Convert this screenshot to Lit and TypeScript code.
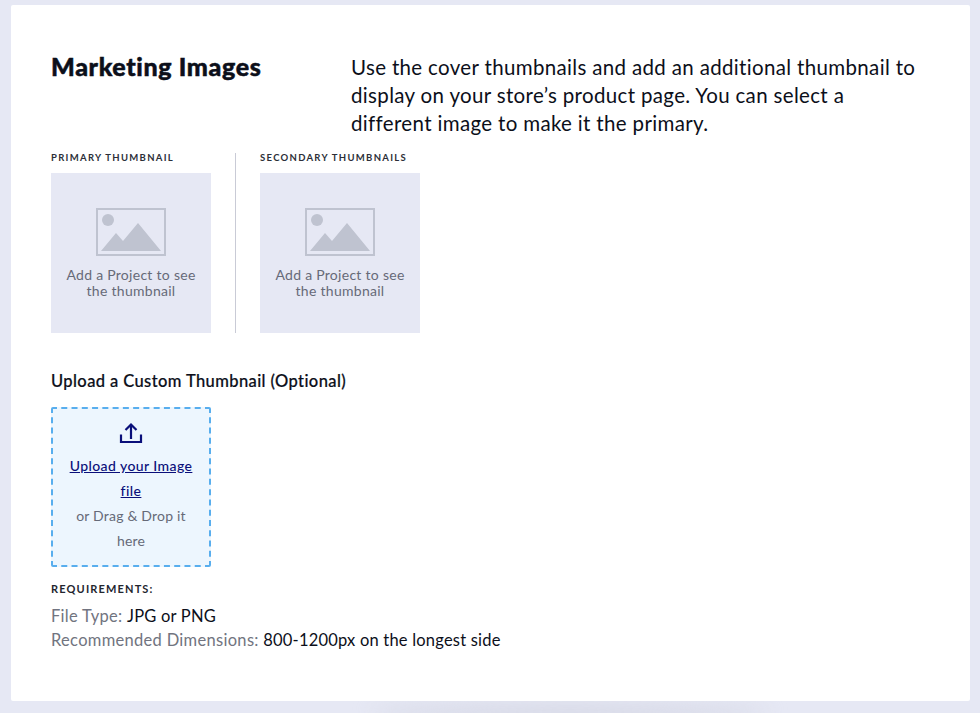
import { LitElement, html, css, svg } from "lit";
import { customElement } from "lit/decorators.js";

const picture = svg`<svg class="pic" width="70" height="48" viewBox="0 0 70 48" aria-hidden="true">
  <rect x="1" y="1" width="68" height="46" fill="none" stroke="#bfc3d0" stroke-width="2"/>
  <circle cx="12" cy="12" r="6" fill="#bfc3d0"/>
  <path d="M5 43 L20 25 L27 33 L42 15 L65 43 Z" fill="#bfc3d0"/>
</svg>`;

@customElement("app-root")
export class AppRoot extends LitElement {
  static styles = css`
    :host {
      display: block;
      min-height: 713px;
      box-sizing: border-box;
      background: #e6e8f4;
      padding: 5px 10px 12px 11px;
      font-family: "Lato", "Noto Sans", sans-serif;
      color: #0c0f1a;
      position: relative;
      overflow: hidden;
    }
    .glow {
      position: absolute;
      left: 370px;
      right: 210px;
      top: 706px;
      height: 14px;
      border-radius: 50%;
      background: #d2d4e2;
      filter: blur(10px);
    }
    .card {
      position: relative;
      background: #fff;
      border-radius: 2px;
      height: 696px;
      box-sizing: border-box;
      padding: 48px 40px 0;
    }
    .head {
      display: flex;
      height: 100px;
    }
    h1 {
      margin: -1px 0 0;
      width: 300px;
      flex: none;
      font-size: 25px;
      line-height: 28px;
      font-weight: 900;
      letter-spacing: 0.65px;
      -webkit-text-stroke: 0.5px #0c0f1a;
      color: #0c0f1a;
    }
    .desc {
      margin: 0;
      width: 580px;
      font-size: 20.5px;
      line-height: 28px;
      letter-spacing: 0.34px;
      color: #0c0f1a;
    }
    .thumbs { display: flex; }
    .col-a {
      width: 160px;
      padding-right: 24px;
      border-right: 1px solid #c9cbd6;
    }
    .col-b { padding-left: 24px; }
    .label {
      font-size: 9.5px;
      line-height: 10px;
      padding-bottom: 10px;
      font-weight: 700;
      letter-spacing: 1.3px;
      color: #2c2f38;
      white-space: nowrap;
    }
    .tile {
      width: 160px;
      height: 160px;
      background: #e6e8f4;
      display: flex;
      flex-direction: column;
      align-items: center;
      padding-top: 35px;
      box-sizing: border-box;
    }
    .pic { display: block; }
    .tile p {
      margin: 11px 0 0;
      font-size: 14px;
      line-height: 16px;
      letter-spacing: 0.28px;
      text-align: center;
      color: #666a78;
      width: 140px;
    }
    h2 {
      margin: 38px 0 0;
      font-size: 16.5px;
      line-height: 20px;
      font-weight: 500;
      letter-spacing: 0.4px;
      -webkit-text-stroke: 0.2px #0c0f1a;
      color: #0c0f1a;
    }
    .drop {
      width: 160px;
      height: 160px;
      margin-top: 16px;
      box-sizing: border-box;
      border: 2px dashed #58aeee;
      border-radius: 2px;
      background: #edf6fe;
      display: flex;
      flex-direction: column;
      align-items: center;
      text-align: center;
      padding: 13px 12px 0;
      font-size: 14px;
      line-height: 25px;
      letter-spacing: 0.2px;
      color: #666a78;
    }
    .drop svg { display: block; margin-bottom: 7px; }
    .drop a {
      color: #0a0f7a;
      font-weight: 500;
      letter-spacing: 0.42px;
      text-decoration: underline;
    }
    .req {
      margin-top: 12px;
      font-size: 11px;
      line-height: 20px;
      font-weight: 700;
      letter-spacing: 1.15px;
      color: #23262f;
    }
    .specs {
      margin-top: 5px;
      font-size: 16.5px;
      line-height: 24px;
      letter-spacing: 0.3px;
      color: #717480;
    }
    .specs b { font-weight: 400; letter-spacing: 0.2px; color: #0c0f1a; }
  `;

  render() {
    return html`
      <div class="glow"></div>
      <section class="card">
        <div class="head">
          <h1>Marketing Images</h1>
          <p class="desc">Use the cover thumbnails and add an additional thumbnail to display on your store’s product page. You can select a different image to make it the primary.</p>
        </div>
        <div class="thumbs">
          <div class="col-a">
            <div class="label">PRIMARY THUMBNAIL</div>
            <div class="tile">${picture}<p>Add a Project to see the thumbnail</p></div>
          </div>
          <div class="col-b">
            <div class="label">SECONDARY THUMBNAILS</div>
            <div class="tile">${picture}<p>Add a Project to see the thumbnail</p></div>
          </div>
        </div>
        <h2>Upload a Custom Thumbnail (Optional)</h2>
        <div class="drop">
          <svg width="24" height="24" viewBox="0 0 24 24" fill="none" stroke="#0a0f7a" stroke-width="2.2" aria-hidden="true">
            <path d="M12 17 V2.5 M6.5 8 L12 2.5 L17.5 8 M2 12.5 V20 H22 V12.5"/>
          </svg>
          <a href="#">Upload your Image file</a>
          <span>or Drag &amp; Drop it here</span>
        </div>
        <div class="req">REQUIREMENTS:</div>
        <div class="specs">
          <div>File Type: <b>JPG or PNG</b></div>
          <div>Recommended Dimensions: <b>800-1200px on the longest side</b></div>
        </div>
      </section>
    `;
  }
}
